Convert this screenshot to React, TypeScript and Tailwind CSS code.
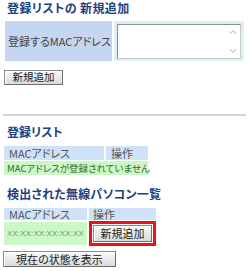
import React from "react";

const font = "font-['Noto_Sans_CJK_JP','Liberation_Sans',sans-serif] [font-feature-settings:'palt']";

function Btn({ children, className = "" }: { children: React.ReactNode; className?: string }) {
  return (
    <div
      className={`flex items-center justify-center border border-[#8a8a8a] border-r-[#6e6e6e] border-b-[#6e6e6e] bg-gradient-to-b from-[#fafafa] to-[#dadada] leading-none text-[#222] shadow-[inset_1px_1px_0_#ffffff] ${className}`}
    >
      {children}
    </div>
  );
}

export default function App() {
  return (
    <div className={`w-[250px] h-[271px] overflow-hidden bg-white ${font}`}>
      <div className="pt-[1px] pl-[7px] h-[15px] text-[12px] leading-[14px] font-bold text-[#22407f] tracking-[0.4px]">
        登録リストの 新規追加
      </div>

      <div className="mt-[6px] ml-[5px] flex gap-[2px] h-[40px]">
        <div className="w-[107px] bg-[#c7d6f0] flex items-center pl-[3px] text-[11px] text-[#444]">
          登録するMACアドレス
        </div>
        <div className="w-[130px] bg-[#dcf0f8] flex items-center pl-[3px]">
          <div className="relative w-[124px] h-[35px] bg-white border border-[#8c8c8c] border-r-[#c8c8c8] border-b-[#c8c8c8]">
            <svg className="absolute right-[3px] top-[4px]" width="8" height="6" viewBox="0 0 8 6">
              <path d="M1 5 L4 1.5 L7 5" fill="none" stroke="#b0b0b0" strokeWidth="1" />
            </svg>
            <svg className="absolute right-[3px] bottom-[4px]" width="8" height="6" viewBox="0 0 8 6">
              <path d="M1 1 L4 4.5 L7 1" fill="none" stroke="#b0b0b0" strokeWidth="1" />
            </svg>
          </div>
        </div>
      </div>

      <Btn className="mt-[9px] ml-[4px] w-[59px] h-[15px] text-[10.5px]">新規追加</Btn>

      <div className="mt-[29px] ml-[3px] w-[243px] h-[2px] bg-[#d4d4d4]" />

      <div className="mt-[9px] pl-[7px] h-[14px] text-[12px] leading-[14px] font-bold text-[#22407f]">
        登録リスト
      </div>

      <div className="mt-[7px] ml-[4px] w-[144px] flex flex-col gap-[1px]">
        <div className="flex gap-[2px] h-[14px]">
          <div className="w-[100px] bg-[#cfe2f7] pl-[5px] text-[11px] leading-[14px] text-[#555]">MACアドレス</div>
          <div className="w-[42px] bg-[#cfe2f7] pl-[5px] text-[11px] leading-[14px] text-[#555]">操作</div>
        </div>
        <div className="h-[14px] bg-[#ccf7c6] pl-[3px] text-[9.5px] leading-[14px] text-[#2f6a2f] whitespace-nowrap">
          MACアドレスが登録されていません
        </div>
      </div>

      <div className="mt-[12px] pl-[7px] h-[14px] text-[12px] leading-[14px] font-bold text-[#22407f] tracking-[0.2px]">
        検出された無線パソコン一覧
      </div>

      <div className="mt-[7px] ml-[4px] flex flex-col gap-[1px]">
        <div className="flex gap-[2px] h-[12px]">
          <div className="w-[83px] bg-[#cfe2f7] pl-[5px] text-[11px] leading-[12px] text-[#555]">MACアドレス</div>
          <div className="w-[67px] bg-[#cfe2f7] pl-[4px] text-[11px] leading-[12px] text-[#555]">操作</div>
        </div>
        <div className="flex gap-[2px] h-[25px]">
          <div className="w-[83px] my-[1px] bg-[#ccf7c6] flex items-center pl-[3px] text-[8px] font-['Liberation_Sans',sans-serif] text-[#5aa55a] whitespace-nowrap tracking-[0.1px]">
            XX:XX:XX:XX:XX:XX
          </div>
          <div className="w-[67px] border-[3px] border-[#e8141b] p-[1px] bg-white">
            <Btn className="w-full h-full text-[11px]">新規追加</Btn>
          </div>
        </div>
      </div>

      <Btn className="mt-[5px] ml-[3px] w-[113px] h-[16px] text-[11px]">現在の状態を表示</Btn>
    </div>
  );
}
